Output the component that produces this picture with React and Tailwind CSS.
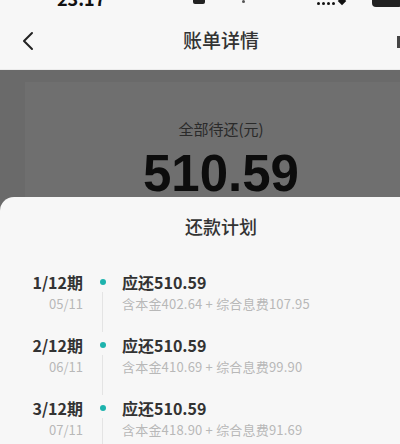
const font = { fontFamily: '"Noto Sans CJK SC", "Liberation Sans", sans-serif' };

const plans = [
  { period: "1/12期", date: "05/11", principal: "402.64", fee: "107.95" },
  { period: "2/12期", date: "06/11", principal: "410.69", fee: "99.90" },
  { period: "3/12期", date: "07/11", principal: "418.90", fee: "91.69" },
];

function PlanRow({ item }) {
  return (
    <div className="flex h-[63px]">
      <div className="w-[83px] flex flex-col items-end">
        <span className="text-[16px] leading-[22px] font-bold text-[#333]">{item.period}</span>
        <span className="text-[13px] leading-[18px] text-[#b8b8b8] mt-[2px]">{item.date}</span>
      </div>
      <div className="w-[39px] flex flex-col items-center">
        <span className="mt-[8px] w-[6px] h-[6px] rounded-full bg-[#1db3ad]" />
        <span className="mt-[7px] w-px h-[40px] bg-[#e4e4e4]" />
      </div>
      <div className="flex flex-col">
        <span className="text-[16px] leading-[22px] font-bold text-[#333]">应还510.59</span>
        <span className="text-[13px] leading-[18px] text-[#b8b8b8] mt-[2px] tracking-[0.2px]">
          含本金{item.principal} + 综合息费{item.fee}
        </span>
      </div>
    </div>
  );
}

export default function App() {
  return (
    <div className="w-[400px] h-[444px] overflow-hidden bg-[#f7f7f7]" style={font}>
      <div className="w-[442px]">
        {/* status bar, cut at top */}
        <div className="h-[12px] relative overflow-hidden">
          <span className="absolute left-[57px] -top-[15px] text-[18px] font-bold text-[#111]">23:17</span>
          <span className="absolute left-[193px] -top-[4px] w-[12px] h-[8px] rounded-[2px] bg-[#222]" />
          <span className="absolute left-[242px] top-[0px] w-[3px] h-[3px] rounded-full bg-[#555]" />
          <span className="absolute left-[317px] top-[2px] flex gap-[2px]">
            <i className="w-[3px] h-[3px] bg-[#111] rounded-full" />
            <i className="w-[3px] h-[3px] bg-[#111] rounded-full" />
            <i className="w-[3px] h-[3px] bg-[#111] rounded-full" />
            <i className="w-[3px] h-[3px] bg-[#111] rounded-full" />
          </span>
          <span className="absolute left-[339px] -top-[2px] w-[6px] h-[6px] rotate-45 bg-[#111]" />
          <span className="absolute left-[372px] -top-[4px] w-[30px] h-[11px] rounded-[4px] bg-[#222]" />
        </div>

        {/* nav */}
        <div className="h-[58px] flex items-center relative border-b border-[#ebebeb]">
          <svg className="absolute left-[20px]" width="16" height="20" viewBox="0 0 16 20" fill="none">
            <path d="M12 2 L4 10 L12 18" stroke="#222" strokeWidth="2" strokeLinecap="round" strokeLinejoin="round" />
          </svg>
          <span className="w-full text-center text-[19px] text-[#333] font-medium">账单详情</span>
          <span className="absolute left-[397px] top-[24px] w-[3px] h-[12px] bg-[#444]" />
        </div>

        {/* dimmed content */}
        <div className="h-[129px] bg-[#6a6a6a] pt-[12px] pl-[25px] pr-[25px]">
          <div className="h-full bg-[#6f6f6f] flex flex-col items-center pt-[36px]">
            <span className="text-[15px] text-[#2a2a2a]">全部待还(元)</span>
            <span
              className="text-[51px] leading-[50px] font-bold text-[#0c0c0c] mt-[8px]"
              style={{ fontFamily: '"Liberation Sans", Arial, sans-serif' }}
            >
              510.59
            </span>
          </div>
        </div>

        {/* sheet */}
        <div className="bg-[#6a6a6a]">
          <div className="bg-[#f7f7f7] rounded-t-[14px] -mt-[2px] relative">
            <div className="h-[58px] flex items-center justify-center relative">
              <span className="text-[18px] font-medium text-[#333]">还款计划</span>
              <span className="absolute left-[398px] top-[22px] text-[16px] text-[#999]">×</span>
            </div>
            <div className="pt-[16px]">
              {plans.map((p) => (
                <PlanRow key={p.period} item={p} />
              ))}
            </div>
          </div>
        </div>
      </div>
    </div>
  );
}
